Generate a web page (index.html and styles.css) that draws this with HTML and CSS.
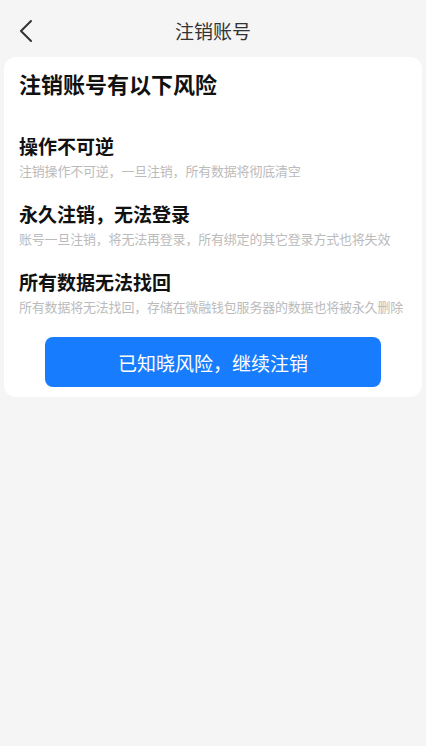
FILE: index.html
```html
<!DOCTYPE html>
<html lang="zh">
<head>
<meta charset="utf-8">
<link rel="stylesheet" href="styles.css">
</head>
<body>
<div class="page">
  <header class="nav">
    <svg class="back" width="16" height="24" viewBox="0 0 16 24"><path d="M13 2 L3 12 L13 22" fill="none" stroke="#333" stroke-width="2" stroke-linecap="round" stroke-linejoin="round"/></svg>
    <div class="nav-title">注销账号</div>
  </header>
  <section class="card">
    <h1 class="title">注销账号有以下风险</h1>
    <div class="item">
      <div class="item-head">操作不可逆</div>
      <div class="item-desc">注销操作不可逆，一旦注销，所有数据将彻底清空</div>
    </div>
    <div class="item">
      <div class="item-head">永久注销，无法登录</div>
      <div class="item-desc">账号一旦注销，将无法再登录，所有绑定的其它登录方式也将失效</div>
    </div>
    <div class="item">
      <div class="item-head">所有数据无法找回</div>
      <div class="item-desc">所有数据将无法找回，存储在微融钱包服务器的数据也将被永久删除</div>
    </div>
    <button class="btn">已知晓风险，继续注销</button>
  </section>
</div>
</body>
</html>
```
FILE: styles.css
```css
html, body {
  margin: 0;
  padding: 0;
  background: #f5f5f5;
  font-family: "Noto Sans CJK SC", "Noto Sans", sans-serif;
}
.page {
  width: 426px;
  min-height: 746px;
  background: #f5f5f5;
}
.nav {
  position: relative;
  height: 57px;
  display: flex;
  align-items: center;
  justify-content: center;
}
.back {
  position: absolute;
  left: 18px;
  top: 19px;
}
.nav-title {
  font-size: 19px;
  color: #333;
  margin-top: 3px;
}
.card {
  margin: 0 4px;
  background: #fff;
  border-radius: 12px;
  padding: 10px 15px 10px 15px;
  height: 320px;
}
.title {
  margin: 0;
  font-size: 22px;
  font-weight: 700;
  color: #111;
  line-height: 32px;
}
.item:first-of-type {
  margin-top: 35px;
}
.item + .item {
  margin-top: 22px;
}
.item-head {
  font-size: 19px;
  font-weight: 700;
  color: #111;
  line-height: 24px;
}
.item-desc {
  margin-top: 3px;
  font-size: 13px;
  color: #bbbbbb;
  line-height: 19px;
  letter-spacing: -0.2px;
  white-space: nowrap;
}
.btn {
  display: block;
  width: 336px;
  height: 50px;
  margin: 21px 0 0 26px;
  border: none;
  border-radius: 8px;
  background: #177cfd;
  color: #fff;
  font-size: 19px;
  font-family: "Noto Sans CJK SC", "Noto Sans", sans-serif;
}
```
